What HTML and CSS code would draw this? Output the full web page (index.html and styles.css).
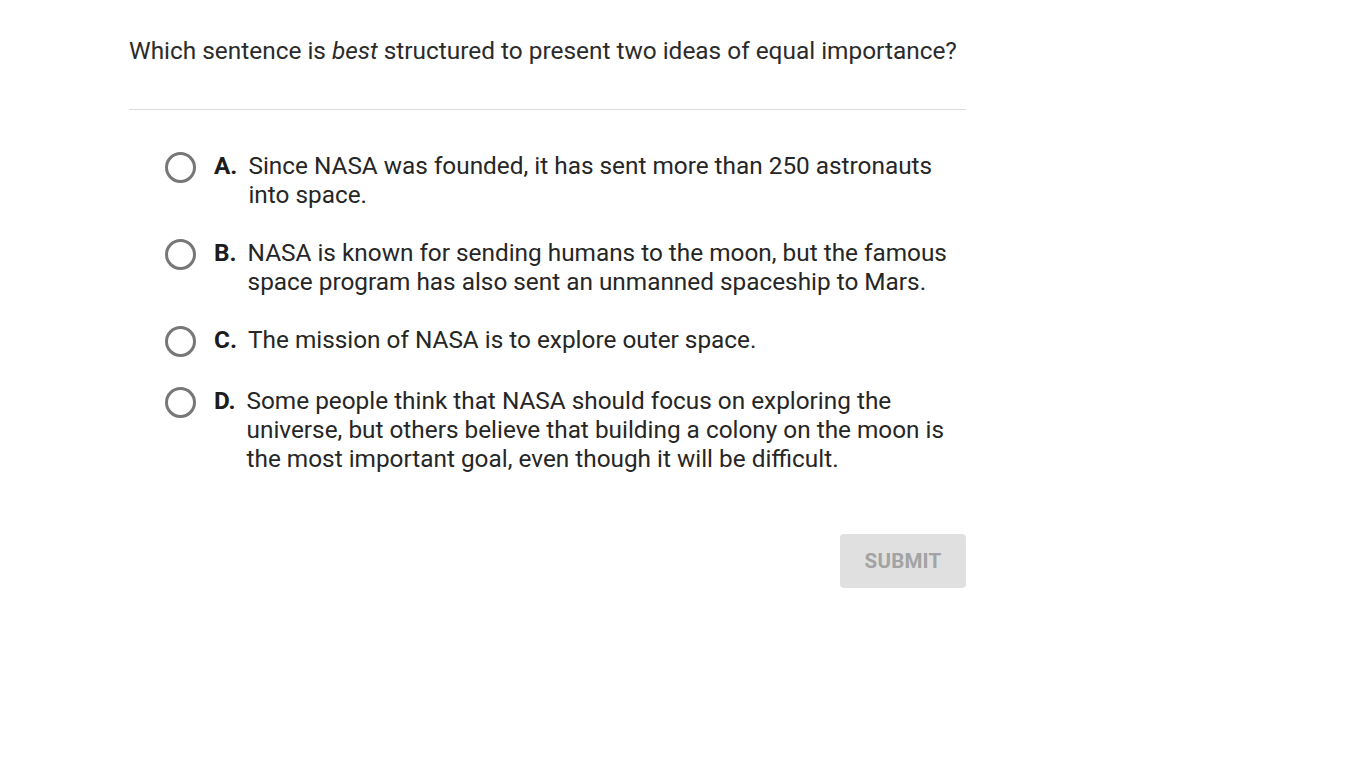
FILE: index.html
```html
<!DOCTYPE html>
<html lang="en">
<head>
<meta charset="utf-8">
<title>Question</title>
<link rel="stylesheet" href="styles.css">
</head>
<body>
<main class="quiz">
  <h1 class="prompt">Which sentence is <em>best</em> structured to present two ideas of equal importance?</h1>
  <hr class="divider">
  <ul class="options">
    <li class="option">
      <span class="radio"></span>
      <span class="letter">A.</span>
      <span class="text">Since NASA was founded, it has sent more than 250 astronauts into space.</span>
    </li>
    <li class="option">
      <span class="radio"></span>
      <span class="letter">B.</span>
      <span class="text">NASA is known for sending humans to the moon, but the famous space program has also sent an unmanned spaceship to Mars.</span>
    </li>
    <li class="option">
      <span class="radio"></span>
      <span class="letter">C.</span>
      <span class="text">The mission of NASA is to explore outer space.</span>
    </li>
    <li class="option">
      <span class="radio"></span>
      <span class="letter">D.</span>
      <span class="text">Some people think that NASA should focus on exploring the universe, but others believe that building a colony on the moon is the most important goal, even though it will be difficult.</span>
    </li>
  </ul>
  <div class="actions">
    <button class="submit" type="button" disabled>SUBMIT</button>
  </div>
</main>
</body>
</html>
```

FILE: styles.css
```css
html, body {
  margin: 0;
  padding: 0;
  background: #ffffff;
}

body {
  font-family: Roboto, "Liberation Sans", Arial, sans-serif;
  color: #212121;
}

.quiz {
  width: 837px;
  margin-left: 129px;
  padding-top: 35px;
}

.prompt {
  margin: 0;
  font-size: 24.4px;
  font-weight: 400;
  line-height: 32px;
  color: #2b2b2b;
}

.prompt em {
  font-style: italic;
}

.divider {
  margin: 42px 0 0 0;
  border: 0;
  border-top: 1px solid #dcdcdc;
  height: 0;
}

.options {
  list-style: none;
  margin: 0;
  padding: 41px 6px 0 36px;
  display: flex;
  flex-direction: column;
  gap: 29px;
}

.option {
  display: flex;
  align-items: flex-start;
  font-size: 24.35px;
  line-height: 29px;
  color: #262626;
}

.radio {
  flex: none;
  width: 31px;
  height: 31px;
  box-sizing: border-box;
  border: 3px solid #777777;
  border-radius: 50%;
  margin-top: 1px;
  margin-right: 18px;
}

.letter {
  flex: none;
  font-weight: 700;
  margin-right: 11px;
  color: #1c1c1c;
}

.text {
  flex: 1;
}

.actions {
  display: flex;
  justify-content: flex-end;
  margin-top: 61px;
}

.submit {
  width: 126px;
  height: 54px;
  border: 0;
  border-radius: 4px;
  background: #e0e0e0;
  color: #a3a3a3;
  font-family: Roboto, "Liberation Sans", Arial, sans-serif;
  font-size: 20.5px;
  font-weight: 700;
  letter-spacing: 0.2px;
  padding: 0;
}
```
